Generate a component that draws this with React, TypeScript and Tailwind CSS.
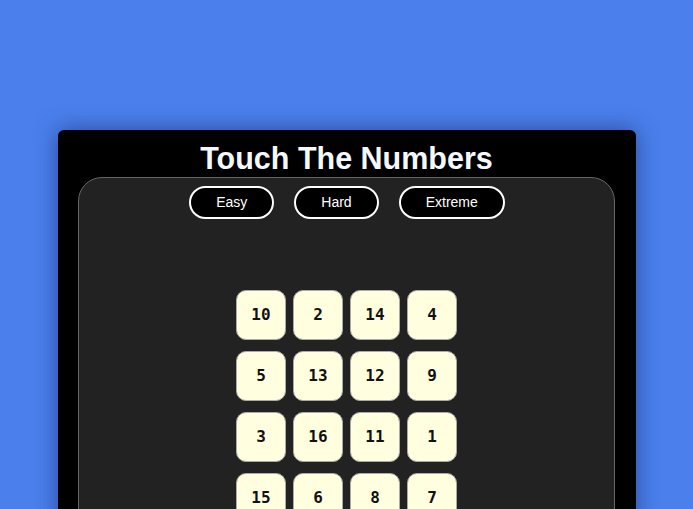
import React from 'react';

const tiles = [10, 2, 14, 4, 5, 13, 12, 9, 3, 16, 11, 1, 15, 6, 8, 7];
const levels = ['Easy', 'Hard', 'Extreme'];

export default function App() {
  return (
    <div className="min-h-[509px] h-[509px] overflow-hidden bg-[#4a7fec] pt-[130px] font-['Liberation_Sans',Arial,sans-serif]">
      <div className="mx-[58px] w-[578px] rounded-[6px] bg-black shadow-[0_0_22px_rgba(20,30,80,0.55)] pl-[20px] pb-[40px]">
        <h1 className="w-[537px] pt-[11px] mb-[1px] text-center text-[30.5px] font-bold leading-[35px] text-[#f4f9ff]">
          Touch The Numbers
        </h1>
        <div className="w-[537px] rounded-[24px] border border-[#666] bg-[#222] pt-[8px] pb-[40px]">
          <div className="flex justify-center gap-[20px] pl-[1px]">
            {levels.map(l => (
              <button
                key={l}
                className="rounded-full border-2 border-white bg-black px-[25px] py-[6px] text-[14px] leading-[17px] text-white"
              >
                {l}
              </button>
            ))}
          </div>
          <div className="mx-auto mt-[71px] grid w-[221px] grid-cols-4 gap-x-[7px] gap-y-[11px]">
            {tiles.map(n => (
              <div
                key={n}
                className="flex h-[50px] w-[50px] items-center justify-center rounded-[10px] border border-[#aaa] bg-[#ffffe0] font-['DejaVu_Sans_Mono','Liberation_Mono',monospace] text-[16px] font-bold text-[#111]"
              >
                {n}
              </div>
            ))}
          </div>
        </div>
      </div>
    </div>
  );
}
